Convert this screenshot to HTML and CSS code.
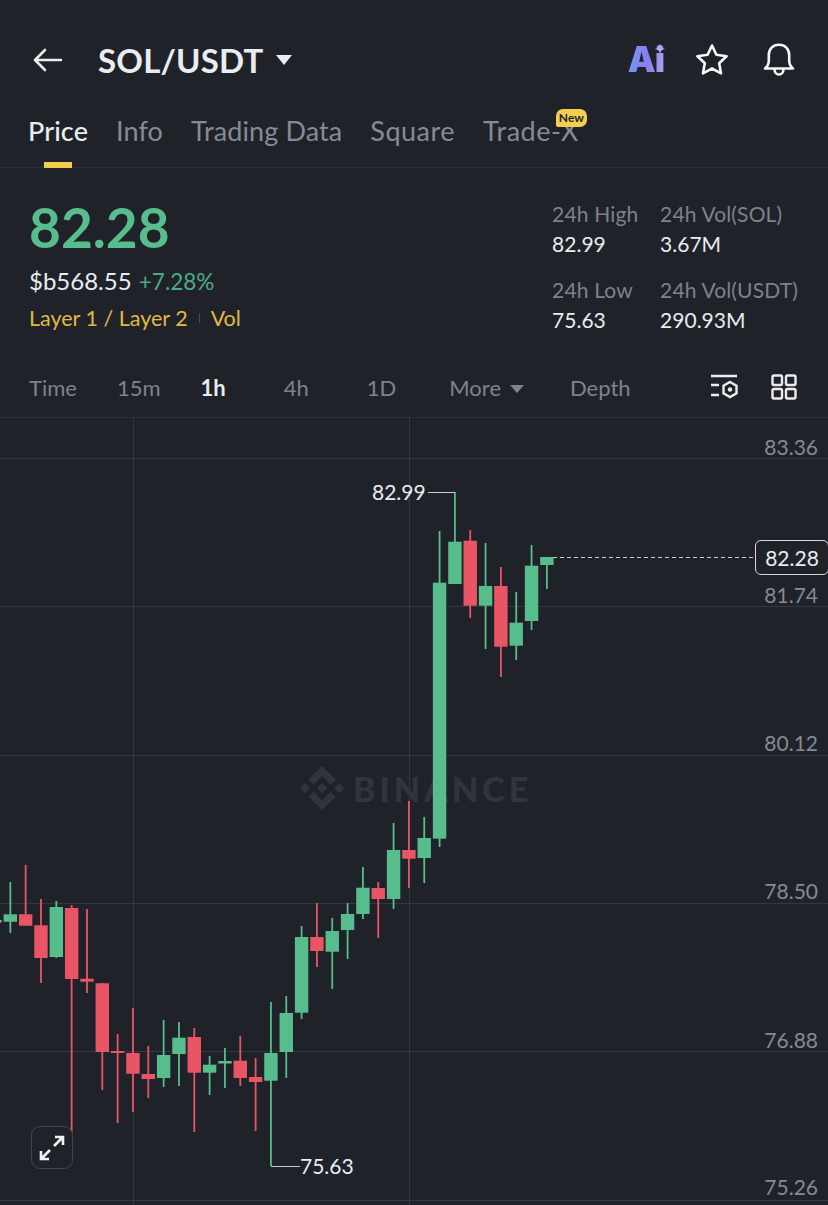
FILE: index.html
```html
<!DOCTYPE html>
<html lang="en">
<head>
  <meta charset="UTF-8">
  <meta name="viewport" content="width=device-width, initial-scale=1.0">
  <title>SOL/USDT</title>
  <link rel="stylesheet" href="styles.css">
</head>
<body>
  <header class="topbar">
    <svg class="back-icon" viewBox="0 0 30 24" width="30" height="24"><path d="M28 12H2M12 2 2 12l10 10"/></svg>
    <h1 class="pair">SOL/USDT</h1>
    <span class="caret"></span>
    <div class="topbar-icons">
      <span class="ai-logo">Ai<svg class="ai-spark" viewBox="0 0 10 10" width="10" height="10"><path d="M5 0l1.300 3.700L10 5 6.300 6.300 5 10 3.700 6.300 0 5l3.700-1.300z"/></svg></span>
      <svg class="line-icon" viewBox="0 0 32 32" width="32" height="32"><path d="M16 1.500l4.400 9.300 10.100 1.400-7.300 7 1.800 10.100-9-4.800-9 4.800 1.800-10.100-7.300-7 10.100-1.400z"/></svg>
      <svg class="line-icon" viewBox="0 0 32 34" width="32" height="34"><path d="M2 25.500c2.500-2 3.800-4 3.800-8V12C5.800 6 10 1.800 16 1.800S26.200 6 26.200 12v5.500c0 4 1.300 6 3.800 8zM11.500 26c0 3 2 5.500 4.500 5.500s4.500-2.500 4.500-5.500"/></svg>
    </div>
  </header>

  <nav class="tabs">
    <a class="tab active">Price</a>
    <a class="tab">Info</a>
    <a class="tab">Trading Data</a>
    <a class="tab tab-wide">Square</a>
    <a class="tab tab-wide">Trade-X<span class="new-badge">New</span></a>
  </nav>

  <section class="summary">
    <div class="price-block">
      <div class="last-price">82.28</div>
      <div class="price-sub"><span>$b568.55</span> <span class="change">+7.28%</span></div>
      <div class="tags"><span>Layer 1 / Layer 2</span><i class="tag-sep"></i><span>Vol</span></div>
    </div>
    <div class="stats">
      <div class="stat"><label>24h High</label><b>82.99</b></div>
      <div class="stat"><label>24h Vol(SOL)</label><b>3.67M</b></div>
      <div class="stat"><label>24h Low</label><b>75.63</b></div>
      <div class="stat"><label>24h Vol(USDT)</label><b>290.93M</b></div>
    </div>
  </section>

  <div class="intervals">
    <span>Time</span>
    <span>15m</span>
    <span class="current">1h</span>
    <span class="spaced">4h</span>
    <span class="spaced">1D</span>
    <span class="more">More<i class="more-caret"></i></span>
    <span class="depth">Depth</span>
    <div class="interval-icons">
      <svg class="small-icon" viewBox="0 0 28 26" width="28" height="26"><path d="M1 2h26M1 11h8M1 21h8"/><path d="M20 8l6.500 3.700v7.600L20 23l-6.500-3.700v-7.600z"/><circle class="dot" cx="20" cy="15.500" r="2.200"/></svg>
      <svg class="small-icon" viewBox="0 0 26 26" width="26" height="26"><rect x="1.500" y="1.500" width="9.500" height="9.500" rx="1.500"/><rect x="15" y="1.500" width="9.500" height="9.500" rx="1.500"/><rect x="1.500" y="15" width="9.500" height="9.500" rx="1.500"/><rect x="15" y="15" width="9.500" height="9.500" rx="1.500"/></svg>
    </div>
  </div>

  <div class="chart">
    <svg id="chartSvg" class="chart-svg" viewBox="0 417 828 788" width="828" height="788">
      <g class="grid">
        <path d="M0 458.500H828M0 606.500H828M0 755.500H828M0 903.500H828M0 1051.500H828M0 1200.500H828M133.500 417V1205M409.500 417V1205"/>
      </g>
      <g class="watermark">
        <g transform="translate(300 766) scale(0.35)">
          <path d="M38.730 53.200L63.300 28.640l24.590 24.580 14.300-14.300L63.300 0 24.420 38.900z"/>
          <path d="M0 63.310l14.300-14.310 14.310 14.310-14.310 14.300z"/>
          <path d="M38.730 73.410L63.300 97.970l24.590-24.580 14.310 14.290-38.900 38.910-38.910-38.880z"/>
          <path d="M98 63.310l14.300-14.310 14.310 14.300-14.310 14.320z"/>
          <path d="M77.830 63.300L63.300 48.760 52.560 59.500l-1.240 1.230-2.540 2.540 14.520 14.500 14.530-14.540z"/>
        </g>
        <text x="353" y="802">BINANCE</text>
      </g>
      <g id="candles"></g>
      <path class="last-line" d="M553 557.500H755"/>
      <path class="marker-line" d="M428 492.500H455M271 1166.500H300"/>
      <text class="marker" x="372" y="500">82.99</text>
      <text class="marker" x="300" y="1174">75.63</text>
      <g class="axis">
        <text x="818" y="455">83.36</text>
        <text x="818" y="603">81.74</text>
        <text x="818" y="751">80.12</text>
        <text x="818" y="899">78.50</text>
        <text x="818" y="1048">76.88</text>
        <text x="818" y="1195">75.26</text>
      </g>
    </svg>
    <span class="last-tag">82.28</span>
    <button class="expand">
      <svg class="expand-icon" viewBox="0 0 28 28" width="28" height="28"><path d="M16 12 25 3M17 3h8v8M12 16l-9 9M3 17v8h8"/></svg>
    </button>
  </div>

  <script src="script.js"></script>
</body>
</html>
```

FILE: styles.css
```css
body {
  margin: 0;
  width: 828px;
  height: 1205px;
  overflow: hidden;
  background: #1f2329;
  color: #eaecef;
  font-family: 'Lato', 'Open Sans', sans-serif;
}

.topbar {
  display: flex;
  align-items: center;
  height: 100px;
  padding: 19px 33px 0 33px;
  box-sizing: border-box;
}

.back-icon {
  fill: none;
  stroke: #eaecef;
  stroke-width: 2.6;
  stroke-linecap: round;
  stroke-linejoin: round;
}

.pair {
  margin: 0 0 0 35px;
  font-size: 33px;
  font-weight: 700;
  letter-spacing: 0.2px;
  color: #eaecef;
}

.caret {
  width: 0;
  height: 0;
  margin: 0 0 0 12px;
  border-left: 8px solid transparent;
  border-right: 8px solid transparent;
  border-top: 10px solid #eaecef;
}

.topbar-icons {
  display: flex;
  align-items: center;
  gap: 35px;
  margin-left: auto;
}

.ai-logo {
  position: relative;
  margin-right: -3px;
  font-family: 'Inter', 'Lato', sans-serif;
  font-size: 35px;
  font-weight: 900;
  letter-spacing: -1px;
  line-height: 1;
  background: linear-gradient(100deg, #6f9bf5, #8b7cf0 55%, #b3a5ee);
  -webkit-background-clip: text;
  background-clip: text;
  color: transparent;
}

.ai-spark {
  position: absolute;
  top: 2px;
  right: -1px;
  fill: #b9a9f0;
}

.line-icon {
  fill: none;
  stroke: #f5f6f7;
  stroke-width: 2.6;
  stroke-linejoin: round;
  stroke-linecap: round;
}

.tabs {
  display: flex;
  gap: 28px;
  height: 68px;
  padding-left: 28px;
  box-sizing: border-box;
  border-bottom: 1px solid #2b3038;
}

.tab {
  position: relative;
  font-size: 27px;
  letter-spacing: 0.1px;
  line-height: 62px;
  color: #868b93;
}

.tab-wide {
  letter-spacing: 0.5px;
}

.tab.active {
  color: #eaecef;
  font-weight: 500;
}

.tab.active::after {
  content: "";
  position: absolute;
  left: 16px;
  bottom: -1px;
  width: 28px;
  height: 6px;
  background: #f0cd4d;
}

.new-badge {
  position: absolute;
  top: 9px;
  right: -8px;
  padding: 0 3px;
  border-radius: 7px 7px 7px 2px;
  background: #f3cf4f;
  color: #1f2329;
  font-size: 12px;
  font-weight: 700;
  letter-spacing: 0;
  line-height: 18px;
}

.summary {
  display: flex;
  justify-content: space-between;
  height: 192px;
  padding: 0 29px;
  box-sizing: border-box;
}

.last-price {
  margin-top: 28px;
  font-size: 55px;
  font-weight: 700;
  line-height: 62px;
  color: #58bd8c;
}

.price-sub {
  margin-top: 7px;
  font-size: 24px;
  line-height: 32px;
  color: #eaecef;
}

.change {
  margin-left: 1px;
  font-size: 22.5px;
  color: #4fa986;
}

.tags {
  display: flex;
  align-items: center;
  margin-top: 5px;
  font-size: 21.5px;
  line-height: 30px;
  color: #e0b946;
}

.tag-sep {
  width: 1px;
  height: 10px;
  margin: 0 11px;
  background: #474d57;
}

.stats {
  display: grid;
  grid-template-columns: 108px auto;
  margin: 31px 1px 0 0;
  align-content: start;
  row-gap: 16px;
}

.stat label {
  display: block;
  font-size: 21px;
  letter-spacing: 0.15px;
  line-height: 30px;
  color: #7c828b;
}

.stat b {
  display: block;
  font-size: 21px;
  font-weight: 400;
  line-height: 30px;
  color: #eaecef;
}

.intervals {
  display: flex;
  align-items: center;
  gap: 40px;
  height: 57px;
  padding: 0 31px 3px 29px;
  box-sizing: border-box;
  font-size: 22px;
  color: #7d838c;
}

.intervals .current {
  color: #eaecef;
  font-weight: 700;
}

.intervals .spaced {
  margin-left: 18px;
}

.intervals .more {
  margin-left: 13px;
}

.intervals .depth {
  margin-left: 6px;
}

.more-caret {
  display: inline-block;
  margin: 0 0 3px 9px;
  border-left: 7px solid transparent;
  border-right: 7px solid transparent;
  border-top: 8px solid #7d838c;
}

.interval-icons {
  display: flex;
  align-items: center;
  gap: 33px;
  margin-left: auto;
}

.small-icon {
  fill: none;
  stroke: #eaecef;
  stroke-width: 2.4;
}

.small-icon .dot {
  fill: #eaecef;
  stroke: none;
}

.chart {
  position: relative;
  height: 788px;
  border-top: 1px solid #2b3038;
  box-sizing: border-box;
}

.chart-svg {
  display: block;
  position: absolute;
  top: -1px;
  left: 0;
  font-family: 'Lato', 'Open Sans', sans-serif;
}

.grid path {
  fill: none;
  stroke: #33383f;
  stroke-width: 1;
}

.watermark path {
  fill: #30353c;
}

.watermark text {
  fill: #30353c;
  font-size: 34px;
  font-weight: 900;
  letter-spacing: 4px;
}

.wick {
  stroke-width: 1.8;
}

.up {
  fill: #58bd8c;
  stroke: #58bd8c;
}

.down {
  fill: #ea5566;
  stroke: #ea5566;
}

.body {
  stroke: none;
}

.last-line {
  fill: none;
  stroke: #c9ccd1;
  stroke-width: 1;
  stroke-dasharray: 4 3;
}

.marker-line {
  fill: none;
  stroke: #c9ccd1;
  stroke-width: 1.2;
}

.marker {
  fill: #eaecef;
  font-size: 21px;
}

.axis text {
  fill: #848a93;
  font-size: 21px;
  text-anchor: end;
}

.last-tag {
  position: absolute;
  top: 122px;
  right: -1px;
  width: 72px;
  height: 33px;
  border: 1px solid #d5d8dc;
  border-radius: 6px;
  background: #1f2329;
  color: #eaecef;
  font-size: 21px;
  line-height: 33px;
  text-align: center;
}

.expand {
  position: absolute;
  left: 31px;
  top: 708px;
  width: 42px;
  height: 43px;
  padding: 0;
  display: flex;
  align-items: center;
  justify-content: center;
  border: 1px solid #41464e;
  border-radius: 9px;
  background: #1f2329;
}

.expand-icon {
  fill: none;
  stroke: #f0f1f3;
  stroke-width: 2.6;
}
```

FILE: script.js
```js
// x of the first candle and distance between candles
const startX = -5;
const stepX = 15.33;
const bodyWidth = 13.4;

// [direction, wick top, wick bottom, body top, body bottom], page y coordinates
const candles = [
  ["up", 921, 921, 920, 922.5],
  ["up", 882, 933, 914.3, 921.7],
  ["down", 865, 926, 914.3, 925.7],
  ["down", 899, 983, 925.3, 958],
  ["up", 901, 958, 907, 957],
  ["down", 905, 1132, 908, 979],
  ["down", 909, 993, 978.7, 981.7],
  ["down", 983, 1090, 983.3, 1052],
  ["down", 1034, 1123, 1051, 1053],
  ["down", 1008, 1112, 1053, 1073.7],
  ["down", 1046, 1098, 1074, 1079],
  ["up", 1020, 1087, 1055, 1078],
  ["up", 1022, 1086, 1037.7, 1054],
  ["down", 1028, 1132, 1037, 1072.7],
  ["up", 1056, 1095, 1064.7, 1072.7],
  ["up", 1048, 1088, 1061, 1063.5],
  ["down", 1036, 1086, 1060.7, 1078],
  ["down", 1058, 1131, 1077, 1082],
  ["up", 1002, 1166, 1053, 1080.7],
  ["up", 996, 1078, 1013, 1052],
  ["up", 926, 1019, 937, 1012.7],
  ["down", 903, 967, 937, 951],
  ["up", 918, 989, 931, 951.7],
  ["up", 903, 959, 914, 930],
  ["up", 867, 919, 887.7, 914],
  ["down", 882, 938, 888, 899],
  ["up", 823, 909, 850, 899],
  ["down", 801, 888, 850, 858.7],
  ["up", 817, 883, 838, 858],
  ["up", 531, 847, 582.7, 838.7],
  ["up", 492, 584, 541.7, 584],
  ["down", 530, 618, 540.7, 605.7],
  ["up", 543, 649, 586, 605.7],
  ["down", 567, 677, 586, 646.7],
  ["up", 592, 660, 622.7, 645.7],
  ["up", 545, 630, 565.7, 621],
  ["up", 557, 589, 557, 565]
];

const svgNs = "http://www.w3.org/2000/svg";
const group = document.getElementById("candles");

function addShape(tag, attrs) {
  const el = document.createElementNS(svgNs, tag);
  Object.keys(attrs).forEach((key) => el.setAttribute(key, attrs[key]));
  group.appendChild(el);
}

candles.forEach((c, i) => {
  const x = startX + stepX * i;
  addShape("line", { class: `wick ${c[0]}`, x1: x, x2: x, y1: c[1], y2: c[2] });
  addShape("rect", {
    class: `body ${c[0]}`,
    x: x - bodyWidth / 2,
    y: c[3],
    width: bodyWidth,
    height: c[4] - c[3]
  });
});
```
